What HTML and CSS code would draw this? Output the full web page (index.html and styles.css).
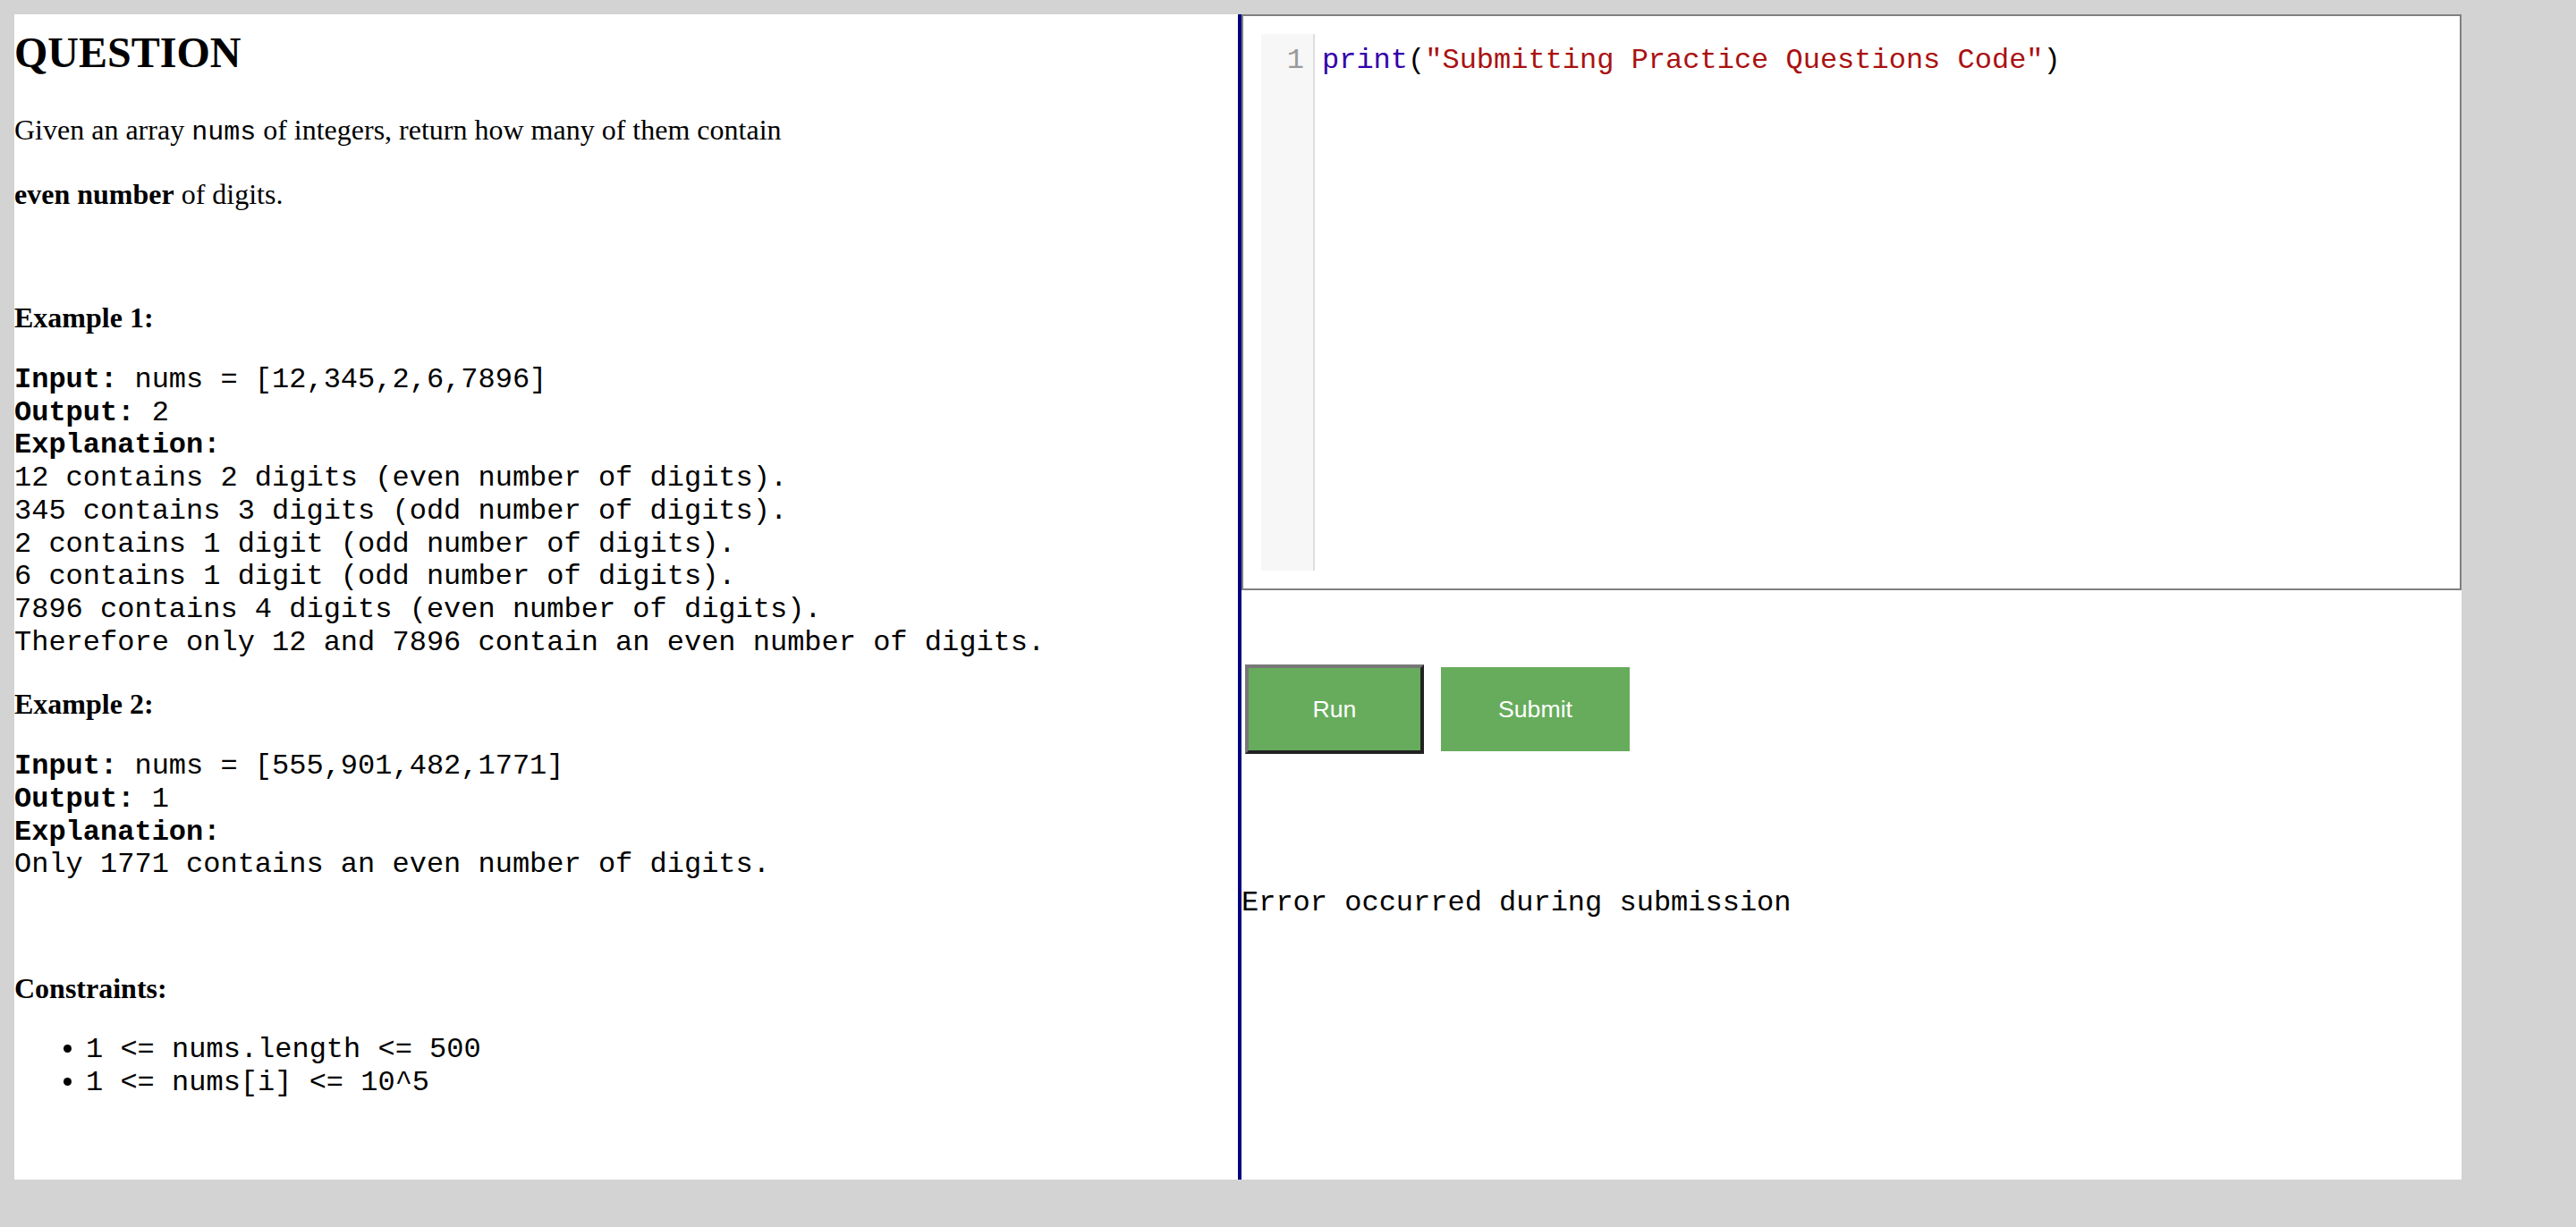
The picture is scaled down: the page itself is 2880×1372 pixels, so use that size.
FILE: index.html
```html
<!DOCTYPE html>
<html lang="en">
<head>
<meta charset="utf-8">
<title>Practice Question</title>
<link rel="stylesheet" href="styles.css">
</head>
<body>
<div class="page">
  <section class="question">
    <h2 class="title">QUESTION</h2>
    <p>Given an array <code class="inline-code">nums</code> of integers, return how many of them contain</p>
    <p><strong>even number</strong> of digits.</p>
    <p>&nbsp;</p>
    <p><strong>Example 1:</strong></p>
    <pre class="example"><strong>Input:</strong> nums = [12,345,2,6,7896]
<strong>Output:</strong> 2
<strong>Explanation:</strong>
12 contains 2 digits (even number of digits).
345 contains 3 digits (odd number of digits).
2 contains 1 digit (odd number of digits).
6 contains 1 digit (odd number of digits).
7896 contains 4 digits (even number of digits).
Therefore only 12 and 7896 contain an even number of digits.</pre>
    <p><strong>Example 2:</strong></p>
    <pre class="example"><strong>Input:</strong> nums = [555,901,482,1771]
<strong>Output:</strong> 1
<strong>Explanation:</strong>
Only 1771 contains an even number of digits.</pre>
    <p>&nbsp;</p>
    <p><strong>Constraints:</strong></p>
    <ul class="constraints">
      <li><code>1 &lt;= nums.length &lt;= 500</code></li>
      <li><code>1 &lt;= nums[i] &lt;= 10^5</code></li>
    </ul>
  </section>
  <section class="workspace">
    <div class="editor">
      <div class="cm">
        <div class="gutter"><div class="linenum">1</div></div>
        <div class="code"><span class="kw">print</span>(<span class="str">"Submitting Practice Questions Code"</span>)</div>
      </div>
    </div>
    <div class="actions">
      <button class="btn btn-run" type="button">Run</button>
      <button class="btn btn-submit" type="button">Submit</button>
    </div>
    <pre class="output">Error occurred during submission</pre>
  </section>
</div>
</body>
</html>
```

FILE: styles.css
```css
html, body {
  background: #d3d3d3;
}
body {
  margin: 16px;
}
.page {
  display: flex;
  width: 2736px;
  height: 1303px;
  background: #ffffff;
}
.question {
  flex: none;
  width: 1368px;
  font-family: "Liberation Serif", "Times New Roman", serif;
  font-size: 32px;
  line-height: 37px;
  color: #000;
}
.title {
  font-size: 48px;
  line-height: 55px;
  font-weight: bold;
  margin: 15px 0 41px 0;
}
.question p {
  margin: 32px 0;
}
.question .title + p {
  margin-top: 0;
}
.inline-code {
  font-family: "Liberation Mono", "Courier New", monospace;
  font-size: 30px;
}
.example {
  font-family: "Liberation Mono", "Courier New", monospace;
  font-size: 32px;
  line-height: 36.7px;
  margin: 33px 0 30px 0;
  white-space: pre;
}
.constraints {
  margin: 32px 0;
  padding-left: 80px;
  font-family: "Liberation Mono", "Courier New", monospace;
  font-size: 32px;
  line-height: 36.7px;
}
.constraints code {
  font-family: "Liberation Mono", "Courier New", monospace;
  font-size: 32px;
  line-height: 36.7px;
}
.workspace {
  flex: none;
  width: 1368px;
  box-sizing: border-box;
  border-left: 4px solid #000080;
  display: flex;
  flex-direction: column;
}
.editor {
  box-sizing: border-box;
  height: 644px;
  border: 2px solid #808080;
  padding: 20px;
  background: #fff;
}
.cm {
  display: flex;
  height: 600px;
  font-family: "Liberation Mono", "Courier New", monospace;
  font-size: 32px;
  line-height: 36.7px;
}
.gutter {
  flex: none;
  width: 58px;
  background: #f7f7f7;
  border-right: 2px solid #dddddd;
}
.linenum {
  padding: 12px 10px 0 0;
  text-align: right;
  color: #999999;
}
.code {
  padding: 12px 8px 0 8px;
  color: #000;
  white-space: pre;
}
.kw {
  color: #3300aa;
}
.str {
  color: #aa1111;
}
.actions {
  display: flex;
  align-items: center;
  margin-top: 83px;
  height: 100px;
}
.btn {
  box-sizing: border-box;
  display: flex;
  align-items: center;
  justify-content: center;
  background: #67ac5c;
  color: #ffffff;
  font-family: "Liberation Sans", Arial, sans-serif;
  font-size: 26.67px;
  padding: 0;
  margin: 0;
}
.btn-run {
  width: 200px;
  height: 100px;
  margin-left: 4px;
  border-width: 4px;
  border-style: solid;
  border-color: #777777 #222222 #222222 #777777;
}
.btn-submit {
  width: 211px;
  height: 94px;
  margin-left: 19px;
  border: none;
}
.output {
  margin: 149px 0 0 0;
  font-family: "Liberation Mono", "Courier New", monospace;
  font-size: 32px;
  line-height: 36.7px;
  color: #000;
}
```
